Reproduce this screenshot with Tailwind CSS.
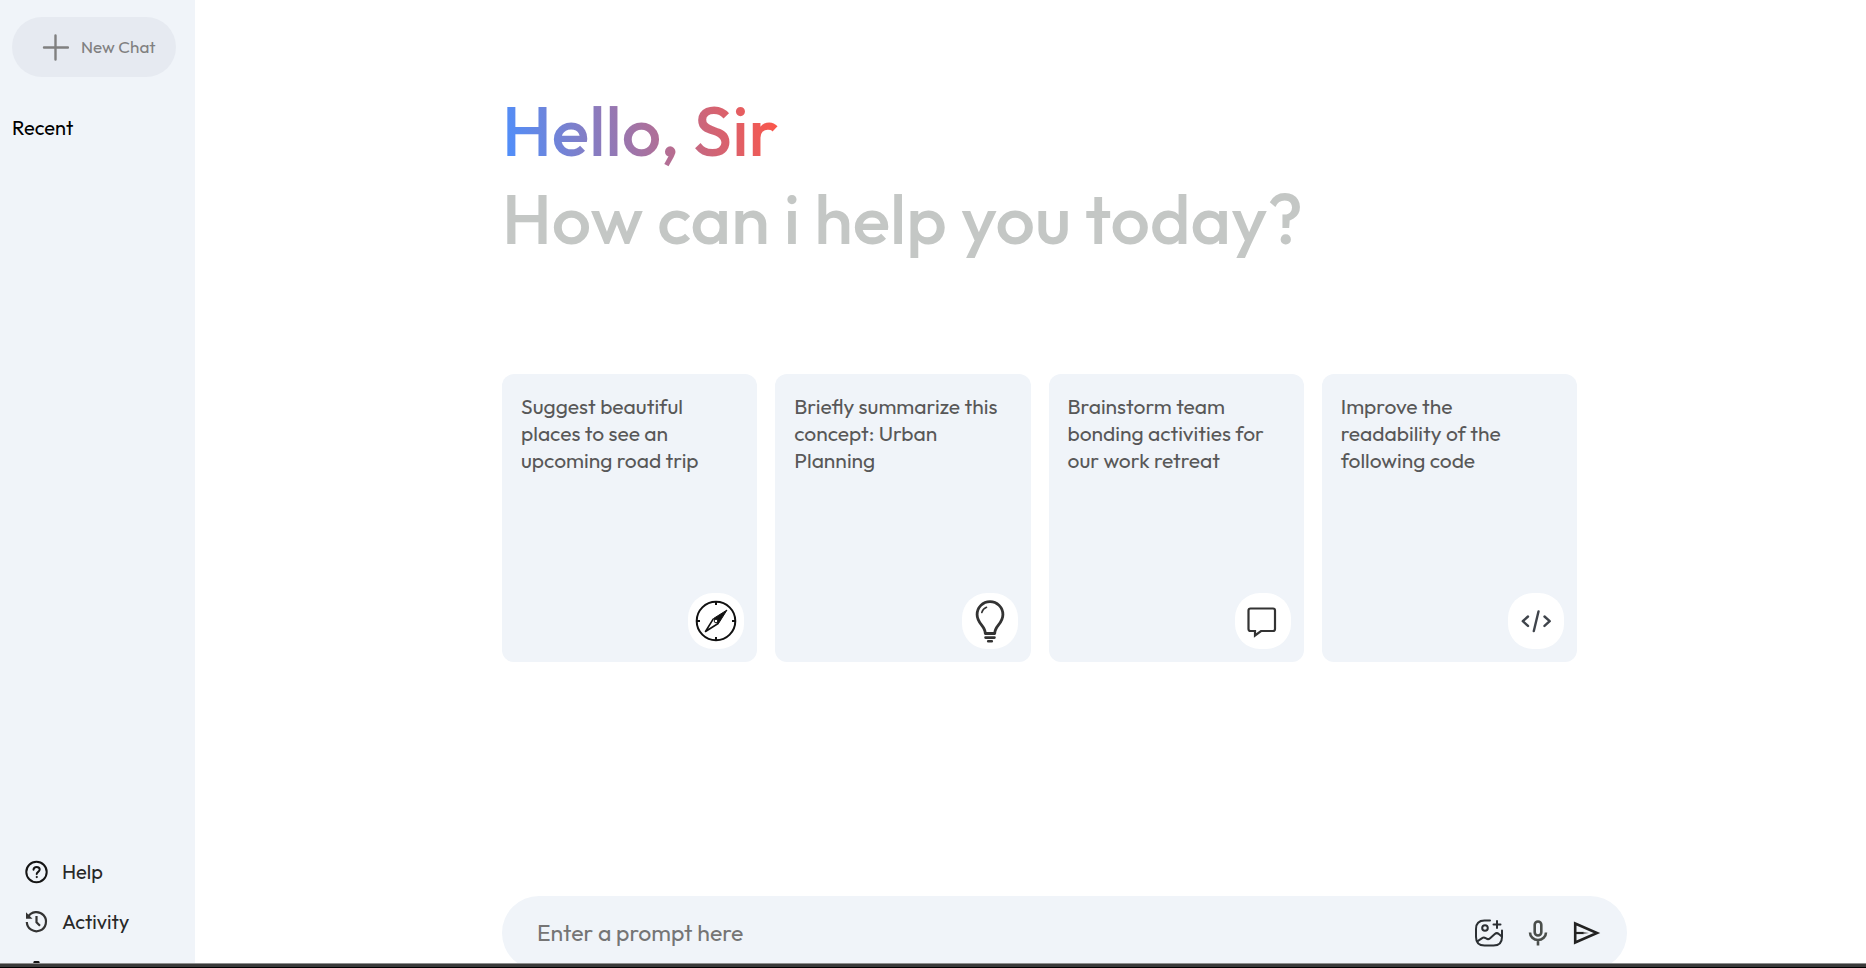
<!DOCTYPE html>
<html lang="en">
<head>
<meta charset="utf-8">
<title>Chat</title>
<script src="https://cdn.jsdelivr.net/npm/@tailwindcss/browser@4"></script>
</head>
<body class="bg-white font-['Outfit','Lato',sans-serif]">
<div class="flex h-screen overflow-hidden">
  <aside class="flex h-[calc(100vh+32px)] w-[195px] shrink-0 flex-col justify-between bg-[#f0f4f9] px-3 pt-[17px] pb-[3px]">
    <div>
      <button type="button" class="flex h-[60px] w-[164px] items-center gap-3 rounded-[30px] bg-[#e6eaf1] pl-[30px] text-[17px] text-[#808080]">
        <svg class="size-[27px]" viewBox="0 0 27 27" fill="none" stroke="#808080" stroke-width="2.4" stroke-linecap="round" aria-hidden="true"><path d="M13.5 1.500v24M2 13.500h24"/></svg>
        New Chat
      </button>
      <h2 class="mt-[38px] text-[20px] leading-[26px] text-black">Recent</h2>
    </div>
    <nav class="flex flex-col pl-3 text-[20px] text-[#282828]">
      <a href="#" class="flex h-[50px] items-center gap-[13px]">
        <svg class="size-[25px]" viewBox="0 0 25 25" fill="none" stroke="#151515" stroke-width="2" stroke-linecap="round" aria-hidden="true"><circle cx="12.5" cy="12" r="10.2"/><path d="M9.5 9.700c.2-1.900 1.500-2.800 3.100-2.800 1.800 0 3.100 1.100 3.100 2.700 0 2.200-3 2.300-3 4.400"/><circle cx="12.600" cy="17" r=".6" fill="#151515" stroke-width="1"/></svg>
        Help
      </a>
      <a href="#" class="flex h-[50px] items-center gap-[13px]">
        <svg class="size-[25px]" viewBox="0 0 25 25" fill="none" stroke="#333" stroke-width="2.200" aria-hidden="true"><path d="M4 7a9.600 9.600 0 1 1-1.200 5"/><path d="M2 2.300v6.500h6.500z" fill="#333" stroke="none"/><path d="M12.500 6v6.300l3.500 3.500"/></svg>
        Activity
      </a>
      <a href="#" class="flex h-[50px] items-center gap-[13px]">
        <svg class="size-[25px]" viewBox="0 0 25 25" fill="none" stroke="#151515" stroke-width="2" stroke-linejoin="round" aria-hidden="true"><path d="M10.500 2h4l.7 3.400 2.200 1.200 3.200-1.100 2 3.400-2.500 2.300v2.600l2.500 2.300-2 3.400-3.200-1.100-2.200 1.200-.7 3.400h-4l-.7-3.400-2.200-1.200-3.200 1.100-2-3.400 2.500-2.300v-2.600L2.400 8.900l2-3.400 3.200 1.100 2.200-1.200z"/><circle cx="12.500" cy="12.500" r="3.500"/></svg>
        Settings
      </a>
    </nav>
  </aside>

  <main class="flex h-[calc(100vh+32px)] min-w-0 flex-1 flex-col justify-between pt-[86px] pr-[239px] pb-[30px] pl-[307px]">
    <div>
      <h1 class="text-[70px] leading-[88px] font-medium text-[#c4c7c5]">
        <span class="block"><span class="bg-[linear-gradient(80deg,#4b90ff,#ff5546)] bg-clip-text text-transparent">Hello, Sir</span></span>
        <span class="block whitespace-nowrap">How can i help you today?</span>
      </h1>
      <div class="mt-[112px] mr-[50px] grid grid-cols-4 gap-[18px] text-[21px] leading-[27px] text-[#585858]">
        <button type="button" class="flex h-[288px] flex-col justify-between rounded-[12px] bg-[#f0f4f9] p-[13px] text-left">
          <span class="pt-[6px] pr-[12px] pl-[6px]">Suggest beautiful places to see an upcoming road trip</span>
          <span class="flex size-[56px] items-center justify-center self-end rounded-[25px] bg-white">
            <svg class="size-[44px]" viewBox="0 0 44 44" fill="none" stroke="#111" stroke-width="2" aria-hidden="true"><circle cx="22" cy="22" r="19.300"/><path d="M22 3v3M22 38v3M3 22h3M38 22h3"/><path d="M33 11L19.500 19.500l5 5z" fill="#111" stroke-width="1"/><path d="M19.300 19.800L11.500 32.500l13-8.200" stroke-width="1.600" stroke-linejoin="round"/><circle cx="22" cy="22" r="1.800" fill="#fff" stroke-width="1"/></svg>
          </span>
        </button>
        <button type="button" class="flex h-[288px] flex-col justify-between rounded-[12px] bg-[#f0f4f9] p-[13px] text-left">
          <span class="pt-[6px] pr-[12px] pl-[6px]">Briefly summarize this concept: Urban Planning</span>
          <span class="flex size-[56px] items-center justify-center self-end rounded-[25px] bg-white">
            <svg class="size-[44px]" viewBox="0 0 44 44" fill="none" stroke="#333" stroke-width="2.800" stroke-linecap="round" aria-hidden="true"><path d="M17.300 34.500c0-8-8.200-9.500-8.200-19a12.900 12.900 0 0 1 25.800 0c0 9.500-8.200 11-8.200 19z" stroke-linejoin="round"/><path d="M17.500 38.600h9M20.200 42.300h3.600" stroke-width="2.600"/><path d="M13.800 13.500c.8-2.700 2.300-4.200 4.700-5.200" stroke-width="1.600"/></svg>
          </span>
        </button>
        <button type="button" class="flex h-[288px] flex-col justify-between rounded-[12px] bg-[#f0f4f9] p-[13px] text-left">
          <span class="pt-[6px] pr-[12px] pl-[6px]">Brainstorm team bonding activities for our work retreat</span>
          <span class="flex size-[56px] items-center justify-center self-end rounded-[25px] bg-white">
            <svg class="size-[44px]" viewBox="0 0 44 44" fill="none" stroke="#333" stroke-width="2.200" aria-hidden="true"><path d="M9.500 9.500h22.500q2 0 2 2v18.500q0 2-2 2H20l-6 4.500v-4.500h-4.500q-2 0-2-2V11.500q0-2 2-2z"/></svg>
          </span>
        </button>
        <button type="button" class="flex h-[288px] flex-col justify-between rounded-[12px] bg-[#f0f4f9] p-[13px] text-left">
          <span class="pt-[6px] pr-[12px] pl-[6px]">Improve the readability of the following code</span>
          <span class="flex size-[56px] items-center justify-center self-end rounded-[25px] bg-white">
            <svg class="size-[44px]" viewBox="0 0 44 44" fill="none" stroke="#3f444b" stroke-width="2.400" stroke-linecap="round" stroke-linejoin="round" aria-hidden="true"><path d="M14 17.500L8.800 22.200l5.200 4.700M30.500 17.500l5.200 4.700-5.200 4.700M24.500 12.500l-4.700 19.500"/></svg>
          </span>
        </button>
      </div>
    </div>

    <form class="flex h-[74px] shrink-0 items-center rounded-full bg-[#f0f4f9] pr-[26px] pl-[35px]">
      <input type="text" aria-label="Prompt" placeholder="Enter a prompt here" class="min-w-0 flex-1 bg-transparent text-[23px] leading-[30px] outline-none placeholder:text-[#757575]">
      <div class="flex items-center gap-[19px]">
        <button type="button" aria-label="Add image" class="size-[30px]">
          <svg class="size-[30px]" viewBox="0 0 30 30" fill="none" stroke="#2b2f33" stroke-width="2" stroke-linecap="round" aria-hidden="true"><path d="M17 2.500h-5.500q-8.500 0-8.500 8.500v8q0 8.500 8.500 8.500h9q8.500 0 8.500-8.500v-6.500"/><circle cx="12" cy="10" r="2.800"/><path d="M24 3v7M20.500 6.500h7M4.300 23.300l5.200-3.400c1-.7 2.100-.5 3 .2 1.800 1.500 3 1.500 4.600.1l4.700-4.200c1.200-1.100 2.800-1.100 4 0l2.700 2.300"/></svg>
        </button>
        <button type="button" aria-label="Voice input" class="size-[30px]">
          <svg class="size-[30px]" viewBox="0 0 30 30" fill="none" stroke="#4a4e4b" stroke-width="2.600" aria-hidden="true"><rect x="12.700" y="3.500" width="6.600" height="14" rx="3.300"/><path d="M8 14.500a8 7.500 0 0 0 16 0M16 22v5.500"/></svg>
        </button>
        <button type="submit" aria-label="Send" class="size-[30px]">
          <svg class="size-[30px]" viewBox="0 0 30 30" fill="none" stroke="#222" stroke-width="2.600" aria-hidden="true"><path d="M4.200 5.500v19L26 15z"/><path d="M5 15h8" stroke-width="2.200"/><path d="M12 13.900l6 1.100-6 1.100z" fill="#555" stroke="none"/></svg>
        </button>
      </div>
    </form>
  </main>
</div>
<div class="fixed inset-x-0 bottom-0 h-[5px] border-t border-b border-t-[#8f8f8f] border-b-black bg-[#3a3a3a]"></div>
</body>
</html>
